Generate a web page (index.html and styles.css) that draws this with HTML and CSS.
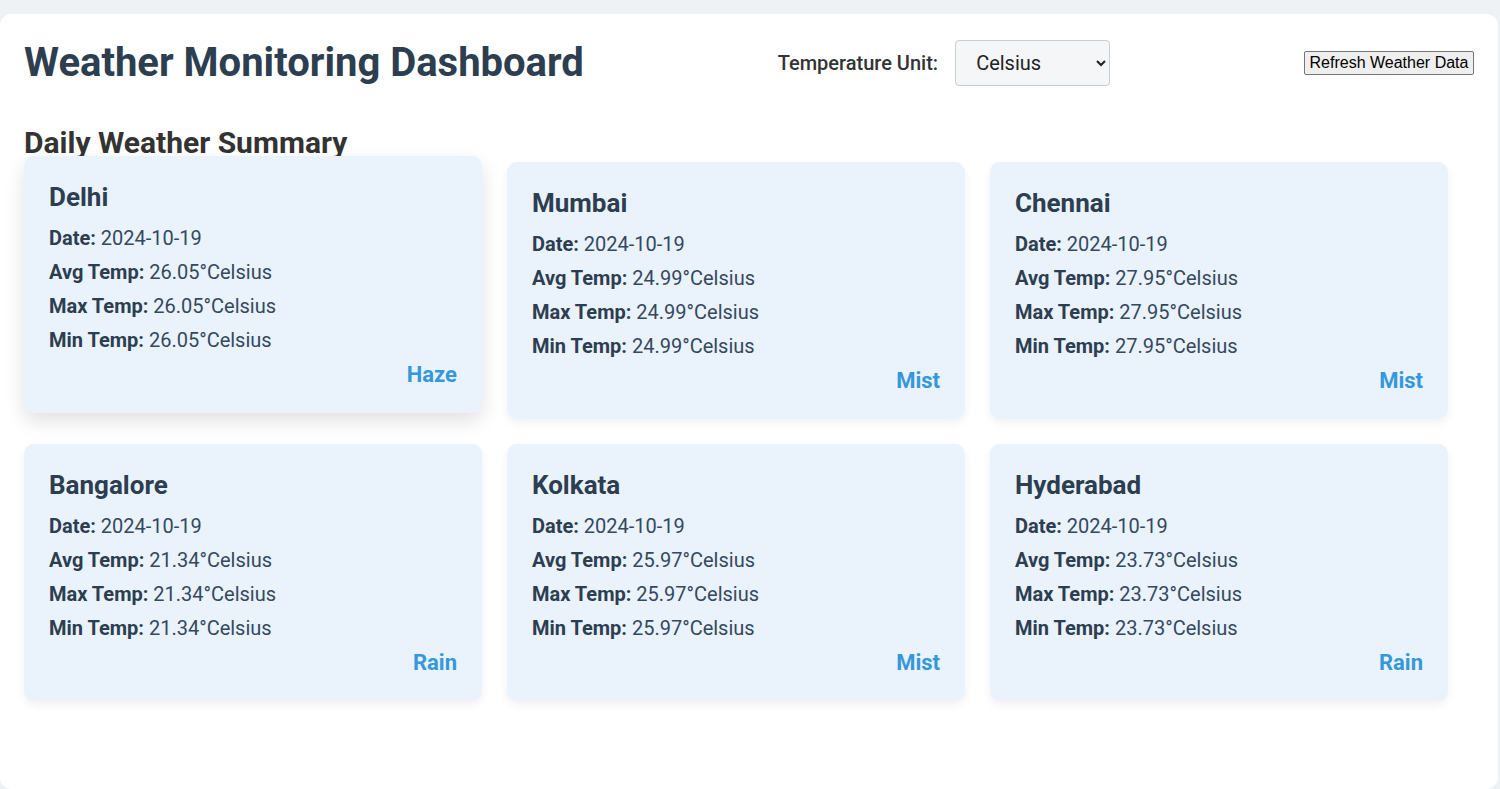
FILE: index.html
```html
<!DOCTYPE html>
<html lang="en">
<head>
<meta charset="utf-8">
<title>Weather Monitoring Dashboard</title>
<link rel="stylesheet" href="styles.css">
</head>
<body>
<div class="container">
  <header class="header">
    <h1 class="title">Weather Monitoring Dashboard</h1>
    <div class="unit-group">
      <label class="unit-label" for="unit">Temperature Unit:</label>
      <select id="unit" class="unit-select">
        <option>Celsius</option>
        <option>Fahrenheit</option>
        <option>Kelvin</option>
      </select>
    </div>
    <button class="refresh-btn">Refresh Weather Data</button>
  </header>

  <h2 class="section-title">Daily Weather Summary</h2>

  <div class="grid">
    <div class="card card-raised">
      <h3 class="city">Delhi</h3>
      <p class="row"><strong>Date:</strong> 2024-10-19</p>
      <p class="row"><strong>Avg Temp:</strong> 26.05°Celsius</p>
      <p class="row"><strong>Max Temp:</strong> 26.05°Celsius</p>
      <p class="row"><strong>Min Temp:</strong> 26.05°Celsius</p>
      <div class="condition">Haze</div>
    </div>
    <div class="card">
      <h3 class="city">Mumbai</h3>
      <p class="row"><strong>Date:</strong> 2024-10-19</p>
      <p class="row"><strong>Avg Temp:</strong> 24.99°Celsius</p>
      <p class="row"><strong>Max Temp:</strong> 24.99°Celsius</p>
      <p class="row"><strong>Min Temp:</strong> 24.99°Celsius</p>
      <div class="condition">Mist</div>
    </div>
    <div class="card">
      <h3 class="city">Chennai</h3>
      <p class="row"><strong>Date:</strong> 2024-10-19</p>
      <p class="row"><strong>Avg Temp:</strong> 27.95°Celsius</p>
      <p class="row"><strong>Max Temp:</strong> 27.95°Celsius</p>
      <p class="row"><strong>Min Temp:</strong> 27.95°Celsius</p>
      <div class="condition">Mist</div>
    </div>
    <div class="card">
      <h3 class="city">Bangalore</h3>
      <p class="row"><strong>Date:</strong> 2024-10-19</p>
      <p class="row"><strong>Avg Temp:</strong> 21.34°Celsius</p>
      <p class="row"><strong>Max Temp:</strong> 21.34°Celsius</p>
      <p class="row"><strong>Min Temp:</strong> 21.34°Celsius</p>
      <div class="condition">Rain</div>
    </div>
    <div class="card">
      <h3 class="city">Kolkata</h3>
      <p class="row"><strong>Date:</strong> 2024-10-19</p>
      <p class="row"><strong>Avg Temp:</strong> 25.97°Celsius</p>
      <p class="row"><strong>Max Temp:</strong> 25.97°Celsius</p>
      <p class="row"><strong>Min Temp:</strong> 25.97°Celsius</p>
      <div class="condition">Mist</div>
    </div>
    <div class="card">
      <h3 class="city">Hyderabad</h3>
      <p class="row"><strong>Date:</strong> 2024-10-19</p>
      <p class="row"><strong>Avg Temp:</strong> 23.73°Celsius</p>
      <p class="row"><strong>Max Temp:</strong> 23.73°Celsius</p>
      <p class="row"><strong>Min Temp:</strong> 23.73°Celsius</p>
      <div class="condition">Rain</div>
    </div>
  </div>
</div>
</body>
</html>
```
FILE: styles.css
```css
html, body {
  margin: 0;
  padding: 0;
}
body {
  background: #eef2f5;
  font-family: Roboto, "Liberation Sans", sans-serif;
  color: #333;
  height: 789px;
  overflow: hidden;
}
.container {
  margin-top: 14px;
  width: 1498px;
  box-sizing: border-box;
  background: #ffffff;
  border-radius: 12px;
  padding: 25px 24px 80px 24px;
  min-height: 775px;
}
.header {
  display: flex;
  justify-content: space-between;
  align-items: center;
  height: 48px;
}
.title {
  margin: 0;
  font-size: 40px;
  font-weight: 700;
  color: #2c3e50;
  line-height: 48px;
}
.unit-group {
  display: flex;
  align-items: center;
  gap: 17px;
}
.unit-label {
  font-size: 20px;
  font-weight: 500;
  color: #333;
}
.unit-select {
  width: 155px;
  height: 46px;
  padding: 0 16px;
  font-family: Roboto, "Liberation Sans", sans-serif;
  font-size: 20px;
  color: #222;
  background: #f4f6f8;
  border: 1px solid #ccc;
  border-radius: 4px;
}
.refresh-btn {
  font-family: "Liberation Sans", Arial, sans-serif;
  font-size: 16px;
  padding: 1px 2px;
  height: 24px;
  width: 170px;
  color: #000;
  background: #efefef;
  border: 1px solid #767676;
  border-radius: 2px;
}
.section-title {
  margin: 38px 0 0 0;
  font-size: 30px;
  font-weight: 700;
  color: #333;
  line-height: 36px;
  height: 36px;
}
.grid {
  display: grid;
  grid-template-columns: repeat(3, 458px);
  column-gap: 25px;
  row-gap: 25px;
  margin-top: 1px;
}
.card {
  background: #eaf2fc;
  border-radius: 10px;
  padding: 26px 25px 25px 25px;
  box-shadow: 0 4px 10px rgba(0, 0, 0, 0.06);
}
.card-raised {
  transform: translateY(-6px);
  box-shadow: 0 8px 20px rgba(0, 0, 0, 0.12);
}
.city {
  margin: 0 0 14px 0;
  font-size: 26px;
  font-weight: 700;
  line-height: 30px;
  color: #2c3e50;
}
.row {
  margin: 10px 0;
  font-size: 20px;
  line-height: 24px;
  color: #34495e;
}
.row strong {
  font-weight: 700;
  color: #2c3e50;
}
.condition {
  margin-top: 10px;
  text-align: right;
  font-size: 22px;
  font-weight: 700;
  line-height: 26px;
  color: #3498db;
}
```
